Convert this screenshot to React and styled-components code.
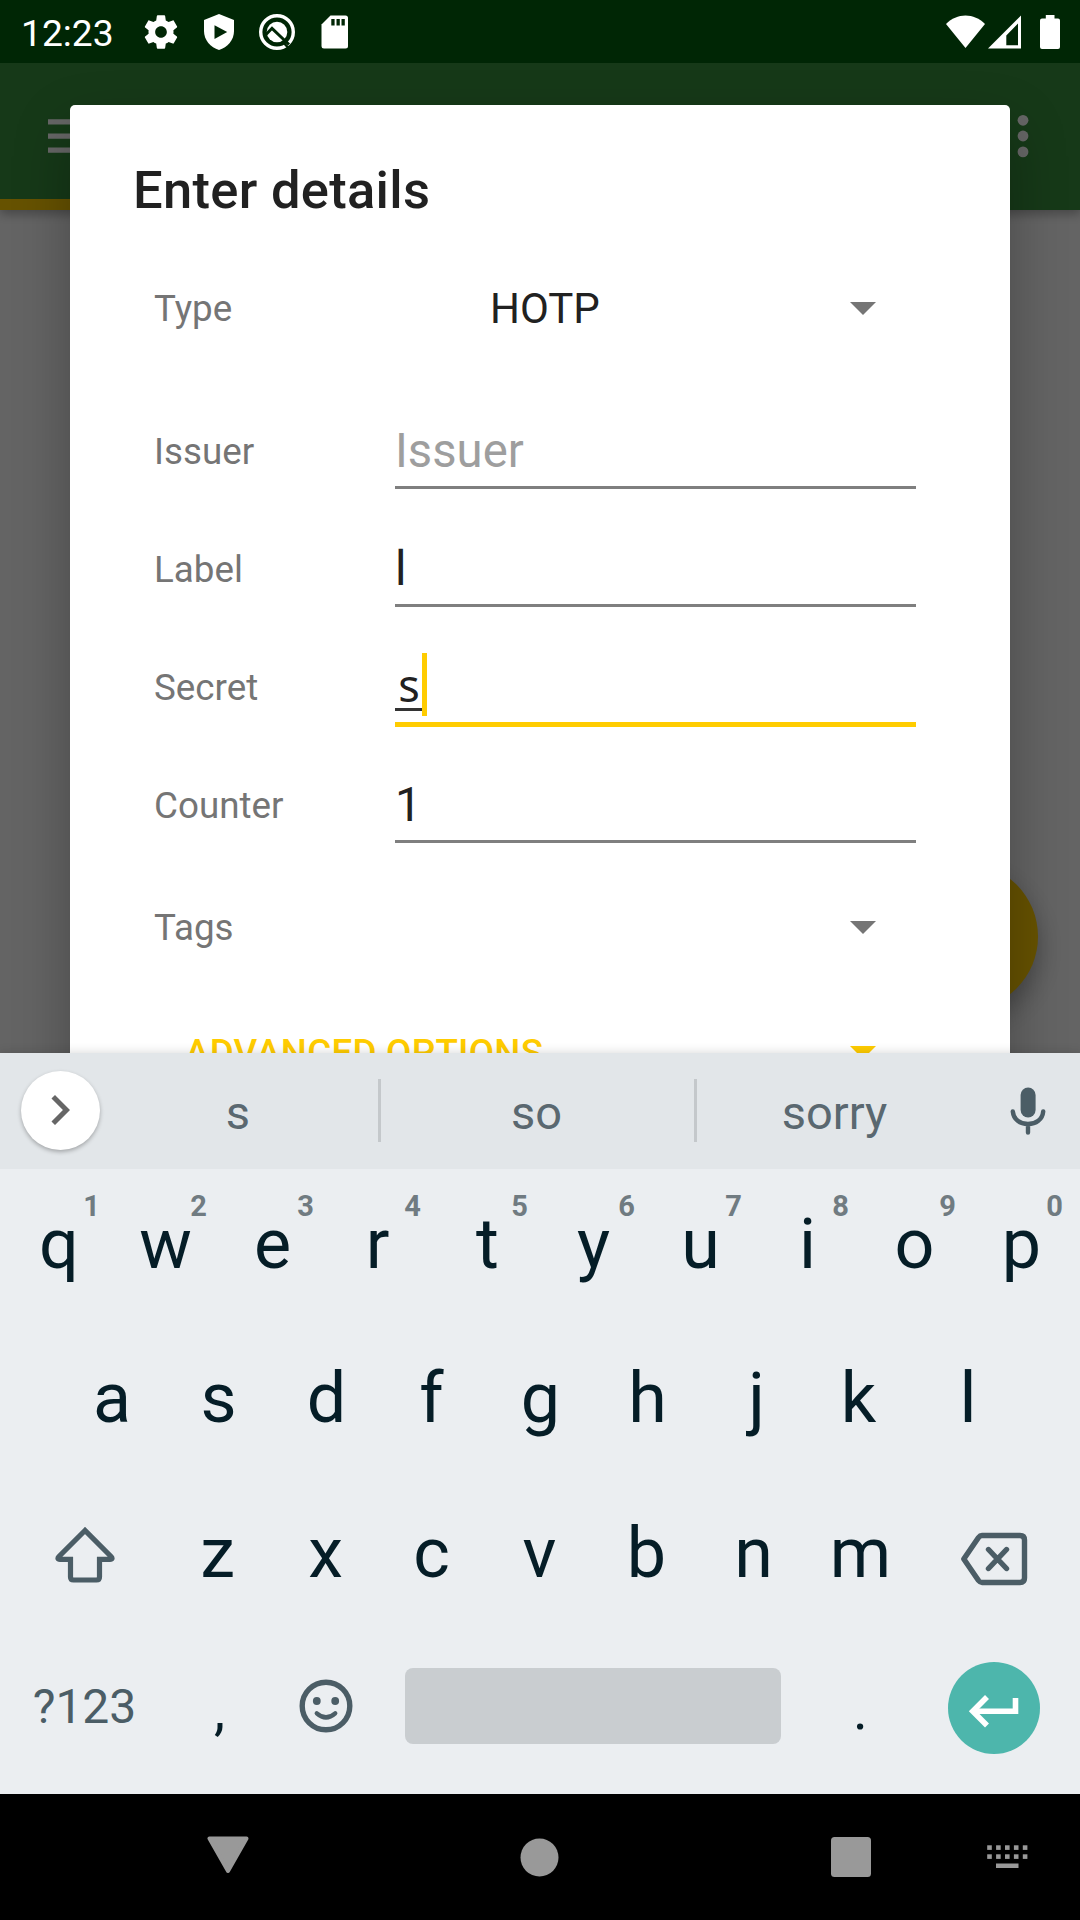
import React from "react";
import styled, { createGlobalStyle, css } from "styled-components";

const GlobalStyle = createGlobalStyle`
  *, *::before, *::after { box-sizing: border-box; }
  html, body { margin: 0; padding: 0; background: #000; }
  body { width: 1080px; height: 1920px; overflow: hidden; font-family: Roboto, "Noto Sans", sans-serif; }
  svg { display: block; flex: none; }
`;

const Screen = styled.div`
  width: 1080px;
  height: 1920px;
  display: grid;
  grid-template-rows: 63px 990px 741px 126px;
  overflow: hidden;
`;

/* ---------- status bar ---------- */

const StatusBar = styled.header`
  display: flex;
  align-items: center;
  background: #002605;
  color: #fff;
  padding: 0 21.500px 0 21px;
`;

const Clock = styled.time`
  width: 120px;
  font-size: 37.2px;
  line-height: 62px;
  padding-top: 3px;
`;

const StatusGroup = styled.div`
  display: flex;
  align-items: center;
`;

const SystemGroup = styled.div`
  display: flex;
  align-items: center;
  gap: 3px;
  margin-left: auto;
`;

const StatusItem = styled.span`
  display: block;
  margin-left: ${(p) => p.$before || 0}px;
`;

/* ---------- app behind the dialog ---------- */

const Stage = styled.main`
  position: relative;
  background: #fafafa;
  overflow: hidden;
`;

const AppBar = styled.div`
  height: 147px;
  display: flex;
  flex-direction: column;
  justify-content: flex-end;
  background: #388e3c;
  box-shadow: 0 4px 10px rgba(0, 0, 0, 0.3);
`;

const Toolbar = styled.div`
  flex: 1;
  display: flex;
  align-items: center;
  justify-content: space-between;
  padding: 10px 52.500px 0 48px;
`;

const TabIndicator = styled.div`
  width: 540px;
  height: 11px;
  background: #ffcc00;
`;

const Fab = styled.div`
  position: absolute;
  right: 43.500px;
  top: 800px;
  width: 147px;
  height: 147px;
  border-radius: 50%;
  background: #ffcc00;
  box-shadow: 0 12px 26px rgba(0, 0, 0, 0.3);
`;

const Scrim = styled.div`
  position: absolute;
  inset: 0;
  background: rgba(0, 0, 0, 0.6);
`;

/* ---------- dialog ---------- */

const Dialog = styled.section`
  position: absolute;
  left: 70px;
  top: 42px;
  width: 940px;
  height: 1100px;
  padding-top: 54px;
  border-radius: 5px;
  background: #fff;
  box-shadow: 0 24px 56px rgba(0, 0, 0, 0.28);
`;

const Title = styled.h1`
  margin: 0 0 56px;
  padding-left: 63px;
  font-size: 52.5px;
  line-height: 62px;
  letter-spacing: 0.3px;
  font-weight: 500;
  color: #212121;
`;

const Form = styled.div`
  display: flex;
  flex-direction: column;
  padding: 0 94px 0 84px;
`;

const SelectRow = styled.div`
  display: grid;
  grid-template-columns: 241px 521px;
  align-items: center;
  height: 62px;
  margin-top: ${(p) => p.$before || 0}px;
`;

const Fields = styled.div`
  display: flex;
  flex-direction: column;
  padding-top: 32px;
`;

const FieldRow = styled.div`
  display: grid;
  grid-template-columns: 241px 521px;
  align-items: end;
  height: 118px;
`;

const Label = styled.label`
  font-size: 36.75px;
  line-height: ${(p) => (p.$field ? 75 : 64)}px;
  color: #757575;
`;

const Select = styled.div`
  display: flex;
  align-items: center;
  justify-content: space-between;
  padding: 0 40px 1px 95px;
  height: 62px;
  font-size: 42px;
  line-height: 62px;
  color: #212121;
`;

const Input = styled.div`
  display: flex;
  align-items: center;
  height: 76px;
  padding-top: 3px;
  font-size: 47.25px;
  color: ${(p) => (p.$hint ? "#9e9e9e" : "#212121")};
  border-bottom: 3px solid #7f7f7f;
  ${(p) =>
    p.$focused &&
    css`
      height: 78px;
      margin-bottom: -2px;
      padding: 0 0 2px;
      border-bottom: 5px solid #ffcc00;
    `}
`;

const Composing = styled.span`
  width: 28px;
  height: 57px;
  margin-top: -5px;
  font-family: "Noto Sans", Roboto, sans-serif;
  font-size: 45px;
  line-height: 61px;
  text-align: center;
  background: linear-gradient(#333, #333) left bottom / 28px 3px no-repeat;
`;

const Caret = styled.span`
  width: 5px;
  height: 63px;
  margin-left: -1px;
  background: #ffcc00;
`;

const Advanced = styled.button`
  display: flex;
  align-items: center;
  justify-content: space-between;
  height: 62px;
  margin: 63.500px 0 0;
  padding: 0 40px 0 31px;
  border: 0;
  background: none;
  font: 500 36.75px/62px Roboto, sans-serif;
  letter-spacing: 0.27px;
  color: #ffcc00;
`;

/* ---------- keyboard ---------- */

const Keyboard = styled.section`
  position: relative;
  display: grid;
  grid-template-rows: 116px 152px 154px 155px 164px;
  background: #ebeef1;
  color: #051d27;
  box-shadow: 0 0 10px rgba(0, 0, 0, 0.16);
`;

const SuggestionStrip = styled.div`
  display: flex;
  align-items: center;
  background: #e2e6e9;
`;

const ExpandButton = styled.div`
  width: 79px;
  height: 79px;
  margin: 0 0 2px 21px;
  padding-right: 2px;
  display: grid;
  place-items: center;
  border-radius: 50%;
  background: #fff;
  box-shadow: 0 2px 4px rgba(0, 0, 0, 0.28);
`;

const Suggestion = styled.div`
  width: ${(p) => p.$w}px;
  padding: 4px 2px 0 0;
  text-align: center;
  font-size: 47px;
  line-height: 60px;
  color: #5a6870;
`;

const Divider = styled.div`
  width: 3px;
  height: 63px;
  margin-bottom: 1px;
  background: #c4c8cb;
`;

const MicSlot = styled.div`
  width: 107px;
  display: grid;
  place-items: center;
`;

const KeyRow = styled.div`
  display: flex;
  align-items: center;
  justify-content: ${(p) => (p.$centered ? "center" : "flex-start")};
  padding: 0 0 ${(p) => p.$lift || 0}px ${(p) => p.$inset || 0}px;
`;

const Key = styled.div`
  position: relative;
  flex: none;
  width: 107px;
  height: 150px;
  font-size: ${(p) => p.$size || 70}px;
  line-height: ${(p) => p.$line || 150}px;
  text-align: center;
  text-indent: ${(p) => (p.$nudge || 0) * 2}px;
`;

const KeyHint = styled.span`
  position: absolute;
  top: 22px;
  left: 71px;
  width: 31px;
  font-size: 29px;
  line-height: 30px;
  font-weight: 700;
  text-indent: 0;
  color: #707b81;
`;

const SideKey = styled.div`
  flex: none;
  width: ${(p) => p.$w}px;
  display: grid;
  place-items: center;
  padding-left: ${(p) => p.$shift || 0}px;
  padding-top: ${(p) => p.$drop || 0}px;
  font-size: 48px;
  line-height: 60px;
  color: #4b5d66;
`;

const SpaceBar = styled.div`
  width: 376px;
  height: 76px;
  margin: 0 26px;
  border-radius: 8px;
  background: #c9cdd0;
`;

const EnterButton = styled.div`
  width: 92px;
  height: 92px;
  margin-top: 4px;
  padding-top: 6px;
  border-radius: 50%;
  display: grid;
  place-items: center;
  background: #4db6ac;
`;

/* ---------- navigation bar ---------- */

const NavBar = styled.nav`
  display: grid;
  grid-template-columns: 384px 311px 280px 105px;
  align-items: center;
  background: #000;
`;

const NavItem = styled.div`
  display: flex;
  justify-content: ${(p) => p.$align || "center"};
  padding: ${(p) => p.$pad || "0"};
`;

/* ---------- icons ---------- */

const GearIcon = () => (
  <svg width="40" height="40" viewBox="0 0 24 24" fill="#fff">
    <path d="M19.43 12.98c.04-.32.07-.64.07-.98s-.03-.66-.07-.98l2.11-1.65c.19-.15.24-.42.12-.64l-2-3.46c-.12-.22-.39-.3-.61-.22l-2.49 1c-.52-.4-1.08-.73-1.69-.98l-.38-2.65C14.46 2.18 14.25 2 14 2h-4c-.25 0-.46.18-.49.42l-.38 2.65c-.61.25-1.17.59-1.69.98l-2.49-1c-.23-.09-.49 0-.61.22l-2 3.46c-.13.22-.07.49.12.64l2.11 1.65c-.04.32-.07.65-.07.98s.03.66.07.98l-2.11 1.65c-.19.15-.24.42-.12.64l2 3.46c.12.22.39.3.61.22l2.49-1c.52.4 1.08.73 1.69.98l.38 2.65c.03.24.24.42.49.42h4c.25 0 .46-.18.49-.42l.38-2.65c.61-.25 1.17-.59 1.69-.98l2.49 1c.23.09.49 0 .61-.22l2-3.46c.12-.22.07-.49-.12-.64l-2.11-1.65zM12 15.5c-1.93 0-3.5-1.57-3.5-3.5s1.57-3.5 3.5-3.5 3.5 1.57 3.5 3.5-1.57 3.5-3.5 3.5z" />
  </svg>
);

const ShieldIcon = () => (
  <svg width="30" height="36" viewBox="0 0 30 36">
    <path d="M15 0L30 6V17C30 26 23.500 33.500 15 36C6.500 33.500 0 26 0 17V6Z" fill="#fff" />
    <path d="M10.500 11.300V25L23.200 18Z" fill="#002605" />
  </svg>
);

const QIcon = () => (
  <svg width="38" height="38" viewBox="0 0 38 38" fill="none">
    <circle cx="19" cy="19" r="16.300" stroke="#fff" strokeWidth="3.400" />
    <circle cx="19" cy="19" r="10.300" fill="#fff" />
    <path d="M8 21.500L14 15.300L22.500 23.500L31 31.500" stroke="#002605" strokeWidth="3" />
    <path d="M25.500 29.500L30 34.500" stroke="#002605" strokeWidth="2.600" />
  </svg>
);

const SdIcon = () => (
  <svg width="27" height="34" viewBox="0 0 27 34">
    <path d="M9.500 .5H24.500A2.500 2.500 0 0 1 27 3V31A2.500 2.500 0 0 1 24.500 33.500H3A2.500 2.500 0 0 1 .5 31V9.500Z" fill="#fff" />
    <path d="M10.300 4h3.300v6.500h-3.300zM15.500 4h3.300v6.500h-3.300zM20.500 4h3.300v6.500h-3.300z" fill="#002605" />
  </svg>
);

const WifiIcon = () => (
  <svg width="39" height="34" viewBox="0 0 39 34">
    <path d="M19.500 33L0 9C11 -2.500 28 -2.500 39 9Z" fill="#fff" />
  </svg>
);

const SignalIcon = () => (
  <svg width="33" height="34" viewBox="0 0 33 34">
    <path fillRule="evenodd" d="M33 .5V33.500H0ZM30 8.500L18.300 20.500V30.300H30Z" fill="#fff" />
  </svg>
);

const BatteryIcon = () => (
  <svg width="20" height="34" viewBox="0 0 20 34">
    <path d="M5.800 0H14.500V3.500H18A2 2 0 0 1 20 5.500V32A2 2 0 0 1 18 34H2A2 2 0 0 1 0 32V5.500A2 2 0 0 1 2 3.500H5.800Z" fill="#fff" />
  </svg>
);

const MenuIcon = () => (
  <svg width="48" height="35" viewBox="0 0 48 35" fill="#fff">
    <path d="M0 .3h47.500v5.300H0zM0 14.500h47.500v5.300H0zM0 28.500h47.500v5.300H0z" />
  </svg>
);

const MoreIcon = () => (
  <svg width="12" height="44" viewBox="0 0 12 44" fill="#fff">
    <circle cx="6" cy="6.300" r="5.400" />
    <circle cx="6" cy="22" r="5.400" />
    <circle cx="6" cy="37.900" r="5.400" />
  </svg>
);

const DropIcon = ({ color }) => (
  <svg width="26" height="13" viewBox="0 0 26 13">
    <path d="M0 0H26L13 13Z" fill={color} />
  </svg>
);

const ChevronIcon = () => (
  <svg width="60" height="60" viewBox="0 0 24 24" fill="#666">
    <path d="M10 6L8.590 7.410 13.170 12l-4.580 4.590L10 18l6-6z" />
  </svg>
);

const MicIcon = () => (
  <svg width="36" height="48" viewBox="0 0 36 48">
    <rect x="10.600" y="0.500" width="15" height="30" rx="7.500" fill="#4b5d66" />
    <path d="M2.800 24.500C3.500 32.500 10 37 18 37S32.500 32.500 33.200 24.500M18 37V45.500" fill="none" stroke="#4b5d66" strokeWidth="4.400" strokeLinecap="round" />
  </svg>
);

const ShiftIcon = () => (
  <svg width="60" height="58" viewBox="0 0 60 58" fill="none" stroke="#4b5d66" strokeWidth="5.200" strokeLinejoin="miter">
    <path d="M30 4.500L4 30.500Q1.500 33.300 5 33.300H15.500V51Q15.500 54 18.500 54H41.500Q44.500 54 44.500 51V33.300H55Q58.500 33.300 56 30.500Z" />
  </svg>
);

const BackspaceIcon = () => (
  <svg width="68" height="54" viewBox="0 0 68 54" fill="none" stroke="#4b5d66" strokeLinecap="round">
    <path strokeWidth="5.400" strokeLinejoin="round" d="M22 3.500H60Q64.500 3.500 64.500 8V46Q64.500 50.500 60 50.500H22Q20 50.500 18.500 48.500L3.800 27L18.500 5.500Q20 3.500 22 3.500Z" />
    <path strokeWidth="5.400" d="M28.500 17.500L46.500 36.500M46.500 17.500L28.500 36.500" />
  </svg>
);

const EmojiIcon = () => (
  <svg width="54" height="54" viewBox="0 0 54 54" fill="none">
    <circle cx="27" cy="27" r="23.800" stroke="#4b5d66" strokeWidth="5.400" />
    <circle cx="17.800" cy="22" r="3.900" fill="#4b5d66" />
    <circle cx="36.200" cy="22" r="3.900" fill="#4b5d66" />
    <path d="M17.800 34.300Q27 42.500 36.200 34.300" stroke="#4b5d66" strokeWidth="4.400" strokeLinecap="round" />
  </svg>
);

const EnterIcon = () => (
  <svg width="52" height="34" viewBox="0 0 52 34" fill="none" stroke="#fff" strokeWidth="5.600">
    <path d="M47.500 4V17.300H6" />
    <path d="M19 3L4.800 17.300L19 31.500" />
  </svg>
);

const BackNavIcon = () => (
  <svg width="42" height="38" viewBox="0 0 42 38">
    <path d="M2.500 2.500H39.500L21 35Z" fill="#999" stroke="#999" strokeWidth="4" strokeLinejoin="round" />
  </svg>
);

const HomeNavIcon = () => (
  <svg width="39" height="39" viewBox="0 0 39 39">
    <circle cx="19.500" cy="19.500" r="19" fill="#999" />
  </svg>
);

const RecentNavIcon = () => (
  <svg width="40" height="40" viewBox="0 0 40 40">
    <rect width="40" height="40" rx="3.500" fill="#999" />
  </svg>
);

const KeyboardNavIcon = () => (
  <svg width="41" height="24" viewBox="0 0 41 24" fill="#999">
    {[0, 9].flatMap((y) =>
      [0, 1, 2, 3, 4].map((i) => (
        <rect key={`${y}-${i}`} x={i * 8.9 + 0.2} y={y + 0.3} width="4.600" height="4.600" />
      ))
    )}
    <rect x="9" y="18.500" width="22.500" height="4.500" />
  </svg>
);

/* ---------- data ---------- */

const topRow = ["q", "w", "e", "r", "t", "y", "u", "i", "o", "p"];
const homeRow = ["a", "s", "d", "f", "g", "h", "j", "k", "l"];
const bottomRow = ["z", "x", "c", "v", "b", "n", "m"];

const nudge = { q: 0.5, r: -2, t: 1, a: -0.5, s: -1, f: -2, j: 2, k: -3, l: -0.5, z: -1, c: -1 };

const Letter = ({ char, children }) => (
  <Key $nudge={nudge[char]}>
    {char}
    {children}
  </Key>
);

const Field = ({ label, children, ...state }) => (
  <FieldRow>
    <Label $field>{label}</Label>
    <Input {...state}>{children}</Input>
  </FieldRow>
);

export default function App() {
  return (
    <>
      <GlobalStyle />
      <Screen>
        <StatusBar>
          <Clock>12:23</Clock>
          <StatusGroup>
            <StatusItem>
              <GearIcon />
            </StatusItem>
            <StatusItem $before={23}>
              <ShieldIcon />
            </StatusItem>
            <StatusItem $before={24}>
              <QIcon />
            </StatusItem>
            <StatusItem $before={25}>
              <SdIcon />
            </StatusItem>
          </StatusGroup>
          <SystemGroup>
            <WifiIcon />
            <SignalIcon />
            <StatusItem $before={16}>
              <BatteryIcon />
            </StatusItem>
          </SystemGroup>
        </StatusBar>

        <Stage>
          <AppBar>
            <Toolbar>
              <MenuIcon />
              <MoreIcon />
            </Toolbar>
            <TabIndicator />
          </AppBar>
          <Fab />
          <Scrim />
          <Dialog>
            <Title>Enter details</Title>
            <Form>
              <SelectRow>
                <Label>Type</Label>
                <Select>
                  HOTP
                  <DropIcon color="#757575" />
                </Select>
              </SelectRow>
              <Fields>
                <Field label="Issuer" $hint>
                  Issuer
                </Field>
                <Field label="Label">l</Field>
                <Field label="Secret" $focused>
                  <Composing>s</Composing>
                  <Caret />
                </Field>
                <Field label="Counter">1</Field>
              </Fields>
              <SelectRow $before={53}>
                <Label>Tags</Label>
                <Select>
                  <span />
                  <DropIcon color="#757575" />
                </Select>
              </SelectRow>
              <Advanced>
                ADVANCED OPTIONS
                <DropIcon color="#ffcc00" />
              </Advanced>
            </Form>
          </Dialog>
        </Stage>

        <Keyboard>
          <SuggestionStrip>
            <ExpandButton>
              <ChevronIcon />
            </ExpandButton>
            <Suggestion $w={278}>s</Suggestion>
            <Divider />
            <Suggestion $w={313}>so</Suggestion>
            <Divider />
            <Suggestion $w={277}>sorry</Suggestion>
            <MicSlot>
              <MicIcon />
            </MicSlot>
          </SuggestionStrip>
          <KeyRow $inset={5} $lift={2}>
            {topRow.map((k, i) => (
              <Letter key={k} char={k}>
                <KeyHint>{(i + 1) % 10}</KeyHint>
              </Letter>
            ))}
          </KeyRow>
          <KeyRow $centered>
            {homeRow.map((k) => (
              <Letter key={k} char={k} />
            ))}
          </KeyRow>
          <KeyRow>
            <SideKey $w={165} $shift={5} $drop={5}>
              <ShiftIcon />
            </SideKey>
            {bottomRow.map((k) => (
              <Letter key={k} char={k} />
            ))}
            <SideKey $w={159} $drop={12}>
              <BackspaceIcon />
            </SideKey>
          </KeyRow>
          <KeyRow $lift={12}>
            <SideKey $w={165} $shift={4} $drop={2}>
              ?123
            </SideKey>
            <Key $size={56} $line={158} $nudge={1}>
              ,
            </Key>
            <SideKey $w={107}>
              <EmojiIcon />
            </SideKey>
            <SpaceBar />
            <Key $size={56} $line={158}>
              .
            </Key>
            <SideKey $w={160}>
              <EnterButton>
                <EnterIcon />
              </EnterButton>
            </SideKey>
          </KeyRow>
        </Keyboard>

        <NavBar>
          <NavItem $pad="0 0 4px 72px">
            <BackNavIcon />
          </NavItem>
          <NavItem>
            <HomeNavIcon />
          </NavItem>
          <NavItem $pad="0 0 0 31px">
            <RecentNavIcon />
          </NavItem>
          <NavItem $align="flex-start" $pad="0 0 0 12px">
            <KeyboardNavIcon />
          </NavItem>
        </NavBar>
      </Screen>
    </>
  );
}
